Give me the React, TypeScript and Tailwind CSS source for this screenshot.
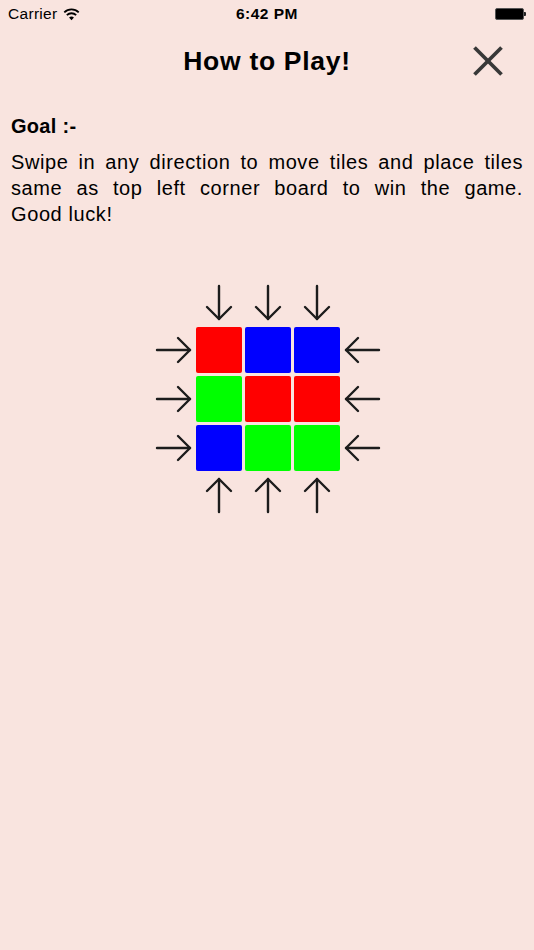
import React from 'react';

type Dir = 'down' | 'up' | 'right' | 'left';

// Long arrow with an open chevron head, drawn pointing down then rotated
const Arrow = ({ dir }: { dir: Dir }) => {
  const rot = dir === 'down' ? 0 : dir === 'up' ? 180 : dir === 'right' ? -90 : 90;
  return (
    <svg width="38" height="38" viewBox="0 0 38 38" style={{ transform: `rotate(${rot}deg)` }}>
      <g stroke="#1c1c1c" strokeWidth="2.4" fill="none" strokeLinecap="round" strokeLinejoin="round">
        <path d="M19 2 V35" />
        <path d="M7 23 L19 35 L31 23" />
      </g>
    </svg>
  );
};

const tiles = [
  'bg-[#ff0000]', 'bg-[#0000ff]', 'bg-[#0000ff]',
  'bg-[#00ff00]', 'bg-[#ff0000]', 'bg-[#ff0000]',
  'bg-[#0000ff]', 'bg-[#00ff00]', 'bg-[#00ff00]',
];

const StatusBar = () => (
  <div className="relative flex h-[28px] items-center px-[8px] text-[15.5px] text-black">
    <div className="flex items-center gap-[6px]">
      <span className="tracking-[0.3px]">Carrier</span>
      <svg width="17" height="13" viewBox="0 0 16 12">
        <path d="M8 11.5 L10.3 8.9 A3.3 3.3 0 0 0 5.7 8.9 Z" fill="#000" />
        <path d="M3.6 6.6 A6.3 6.3 0 0 1 12.4 6.6" stroke="#000" strokeWidth="1.7" fill="none" />
        <path d="M1.2 4 A9.8 9.8 0 0 1 14.8 4" stroke="#000" strokeWidth="1.7" fill="none" />
      </svg>
    </div>
    <div className="absolute left-0 right-0 top-0 flex h-[28px] items-center justify-center font-semibold tracking-[0.5px]">6:42 PM</div>
    <div className="ml-auto flex items-center">
      <div className="h-[12px] w-[29px] rounded-[2px] border border-[#555] bg-black" />
      <div className="h-[4px] w-[2px] rounded-r-[1px] bg-[#222]" />
    </div>
  </div>
);

export default function App() {
  return (
    <div
      className="flex min-h-[950px] w-full flex-col bg-[#f9e4df] text-black"
      style={{ fontFamily: '"Helvetica Neue", "Liberation Sans", Arial, sans-serif' }}
    >
      <StatusBar />
      <div className="relative flex h-[68px] items-center justify-center">
        <h1 className="text-[26.5px] font-bold tracking-[0.7px]">How to Play!</h1>
        <button className="absolute right-[31px] top-[18px] flex h-[30px] w-[30px] items-center justify-center" aria-label="Close">
          <svg width="30" height="30" viewBox="0 0 30 30">
            <g stroke="#383838" strokeWidth="3.8" strokeLinecap="butt">
              <path d="M1.5 1.5 L28.5 28.5" />
              <path d="M28.5 1.5 L1.5 28.5" />
            </g>
          </svg>
        </button>
      </div>
      <div className="px-[11px] pt-[17px] text-[20px] leading-[26px]">
        <h2 className="font-bold tracking-[0.3px]">Goal :-</h2>
        <p className="mt-[10px] text-justify tracking-[0.6px] [text-align-last:justify]">
          Swipe in any direction to move tiles and place tiles same as top left corner board to win the game.
        </p>
        <p className="tracking-[0.6px]">Good luck!</p>
      </div>
      <div className="mt-[57px] flex justify-center">
        <div className="grid grid-cols-[38px_144px_38px] grid-rows-[38px_144px_38px] gap-x-[3px] gap-y-[5px] pl-[2px]">
          <div />
          <div className="grid grid-cols-3 gap-[3px]">
            <div className="flex justify-center"><Arrow dir="down" /></div>
            <div className="flex justify-center"><Arrow dir="down" /></div>
            <div className="flex justify-center"><Arrow dir="down" /></div>
          </div>
          <div />
          <div className="grid grid-rows-3 gap-[3px]">
            <div className="flex items-center"><Arrow dir="right" /></div>
            <div className="flex items-center"><Arrow dir="right" /></div>
            <div className="flex items-center"><Arrow dir="right" /></div>
          </div>
          <div className="grid grid-cols-3 grid-rows-3 gap-[3px]">
            {tiles.map((c, i) => (
              <div key={i} className={`${c} rounded-[2px]`} />
            ))}
          </div>
          <div className="grid grid-rows-3 gap-[3px]">
            <div className="flex items-center"><Arrow dir="left" /></div>
            <div className="flex items-center"><Arrow dir="left" /></div>
            <div className="flex items-center"><Arrow dir="left" /></div>
          </div>
          <div />
          <div className="grid grid-cols-3 gap-[3px]">
            <div className="flex justify-center"><Arrow dir="up" /></div>
            <div className="flex justify-center"><Arrow dir="up" /></div>
            <div className="flex justify-center"><Arrow dir="up" /></div>
          </div>
          <div />
        </div>
      </div>
    </div>
  );
}
